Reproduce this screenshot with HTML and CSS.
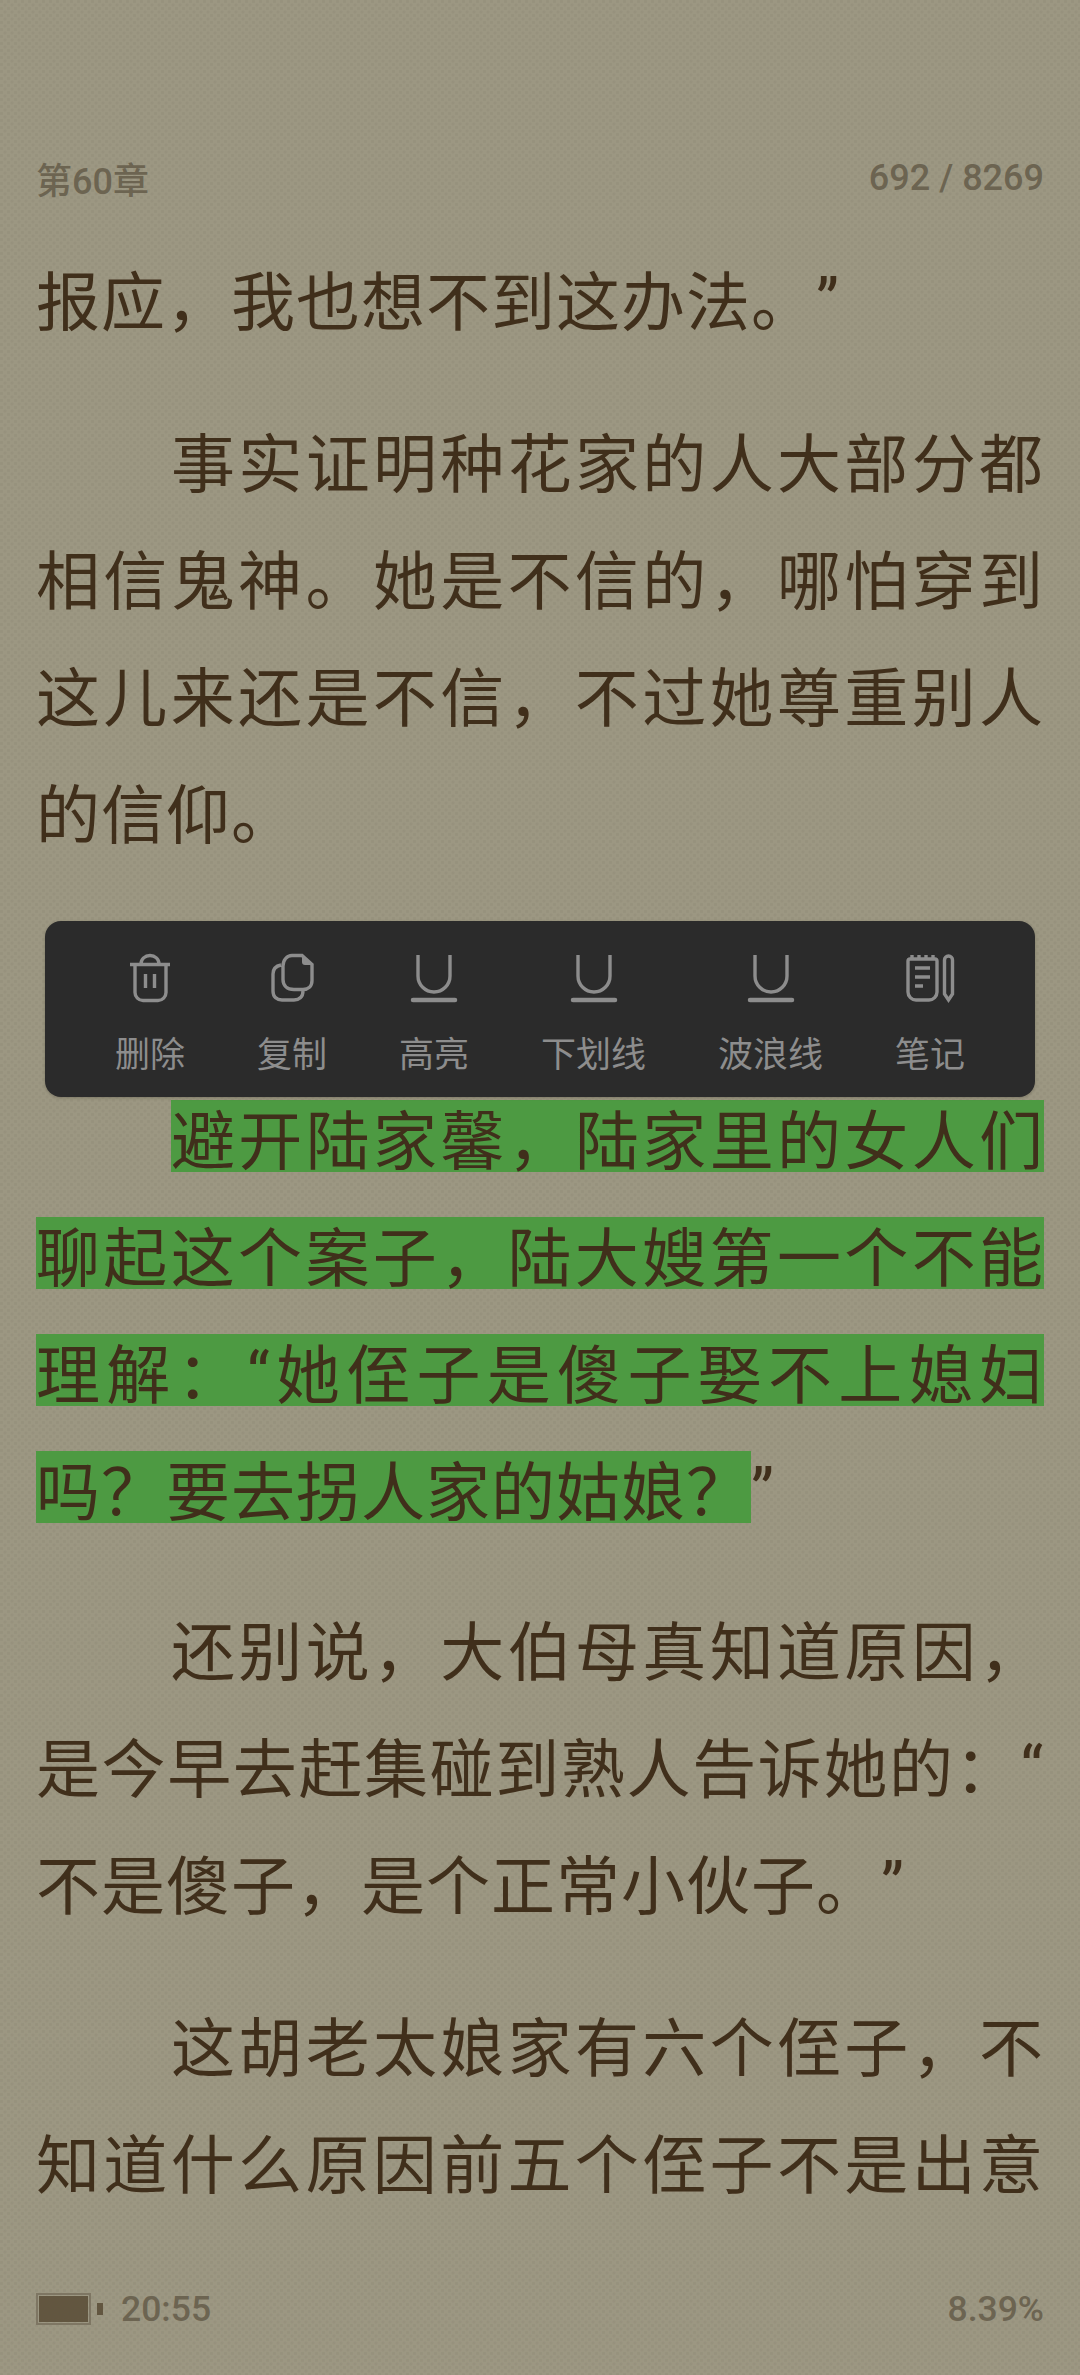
FILE: index.html
```html
<!DOCTYPE html>
<html lang="zh-CN">
<head>
<meta charset="utf-8">
<title>第60章</title>
<link rel="stylesheet" href="styles.css">
</head>
<body>
<div class="page">
  <header class="top"><span>第60章</span><span>692 / 8269</span></header>
  <main class="text">
    <p class="para"><span class="line last">报应，我也想不到这办法。<i class="q">”</i></span></p>
    <p class="para">
      <span class="line indent">事实证明种花家的人大部分都</span>
      <span class="line">相信鬼神。她是不信的，哪怕穿到</span>
      <span class="line">这儿来还是不信，不过她尊重别人</span>
      <span class="line last">的信仰。</span>
    </p>
    <p class="para gap">
      <span class="line indent hl">避开陆家馨，陆家里的女人们</span>
      <span class="line hl">聊起这个案子，陆大嫂第一个不能</span>
      <span class="line hl">理解<b class="c">：</b><i class="q">“</i>她侄子是傻子娶不上媳妇</span>
      <span class="line last"><span class="hl-run">吗？要去拐人家的姑娘？</span><i class="q">”</i></span>
    </p>
    <p class="para">
      <span class="line indent">还别说，大伯母真知道原因，</span>
      <span class="line">是今早去赶集碰到熟人告诉她的<b class="c">：</b><i class="q">“</i></span>
      <span class="line last">不是傻子，是个正常小伙子。<i class="q">”</i></span>
    </p>
    <p class="para">
      <span class="line indent">这胡老太娘家有六个侄子，不</span>
      <span class="line">知道什么原因前五个侄子不是出意</span>
    </p>
  </main>
  <footer class="bottom">
    <div class="status">
      <span class="battery"><span class="level"></span></span><span class="nub"></span>
      <span class="time">20:55</span>
    </div>
    <span>8.39%</span>
  </footer>
  <nav class="menu">
    <div class="tool">
      <svg class="ic" viewBox="0 0 48 48"><path d="M4 10.500h40M15 10c0-5 4-8.500 9-8.500s9 3.500 9 8.500M9 10.500v28a8 8 0 0 0 8 8h15a8 8 0 0 0 8-8v-28M19.500 20v14M28.500 20v14"/></svg>
      <span>删除</span>
    </div>
    <div class="tool">
      <svg class="ic" viewBox="0 0 48 48"><path d="M13 11c-5 1-8 4-8 9v17c0 6 4 9 9 9h12c5 0 9-3 9-9M24 1.500h10l10 9v16c0 6-4 9-9 9h-9c-7 0-11-4-11-10V12c0-6 4-10.500 9-10.500z"/><path class="fill" d="M34 2l10 9h-7a3 3 0 0 1-3-3z"/></svg>
      <span>复制</span>
    </div>
    <div class="tool">
      <svg class="ic" viewBox="0 0 48 48"><path d="M8 1v21a16 16 0 0 0 32 0V1"/><path class="thick" d="M3 46h42"/></svg>
      <span>高亮</span>
    </div>
    <div class="tool wide">
      <svg class="ic" viewBox="0 0 48 48"><path d="M8 1v21a16 16 0 0 0 32 0V1"/><path class="thick" d="M3 46h42"/></svg>
      <span>下划线</span>
    </div>
    <div class="tool wide">
      <svg class="ic" viewBox="0 0 48 48"><path d="M8 1v21a16 16 0 0 0 32 0V1"/><path class="thick" d="M3 46h42"/></svg>
      <span>波浪线</span>
    </div>
    <div class="tool">
      <svg class="ic" viewBox="0 0 48 48"><path d="M6 1v4M13 1v4M20 1v4M27 1v4M2 7v31a8 8 0 0 0 8 8h13a8 8 0 0 0 8-8V7q0-2-2-2H4q-2 0-2 2zM9 14h15M9 23h15M9 32h8M38.500 6a4 4 0 0 1 8 0v34l-4 6-4-6z"/></svg>
      <span>笔记</span>
    </div>
  </nav>
</div>
</body>
</html>
```
FILE: styles.css
```css
* { box-sizing: border-box; margin: 0; padding: 0; }
html, body { width: 1080px; height: 2375px; overflow: hidden; }
body {
  font-family: "Noto Sans CJK SC", Roboto, sans-serif;
  background-color: #9c9782;
  background-image:
    radial-gradient(circle at 1.5px 1.5px, rgba(84, 78, 60, .07) 1.3px, transparent 1.8px),
    radial-gradient(circle at 5px 5px, rgba(84, 78, 60, .07) 1.3px, transparent 1.8px);
  background-size: 7px 7px;
}
.page {
  position: relative;
  width: 1080px;
  height: 2375px;
  display: flex;
  flex-direction: column;
  padding: 0 36px;
}
.top, .bottom {
  display: flex;
  justify-content: space-between;
  align-items: center;
  font-family: Roboto, "Noto Sans CJK SC", sans-serif;
  font-weight: 500;
  font-size: 36px;
  color: #6c6451;
}
.top { height: 50px; margin-top: 153px; }
.text { flex: 1; padding-top: 58px; color: #402f1b; }
.para { padding-bottom: 45px; }
.gap { margin-top: 164px; padding-bottom: 43px; }
.line {
  display: block;
  height: 72px;
  line-height: 72px;
  margin-bottom: 45px;
  font-size: 64px;
  letter-spacing: 1px;
  text-align: justify;
  text-align-last: justify;
  white-space: nowrap;
  text-spacing-trim: space-all;
}
.line.last { text-align-last: left; }
.indent { margin-left: 135px; }
.hl, .hl-run { background: rgba(74, 154, 64, .97); }
.hl-run { display: inline-block; height: 72px; }
.q { font-family: Roboto, sans-serif; font-style: normal; }
.c { font-family: "Noto Sans CJK TC", sans-serif; font-weight: 400; }
.bottom { height: 50px; margin-bottom: 43px; font-size: 35.500px; }
.status { display: flex; align-items: center; }
.battery {
  width: 55px;
  height: 32px;
  border: 2px solid #7e7663;
  padding: 1px;
  display: block;
}
.level { display: block; width: 100%; height: 100%; background: #625640; }
.nub { width: 6px; height: 12px; margin-left: 6px; background: #625640; }
.time { margin-left: 18px; }
.menu {
  position: absolute;
  left: 45px;
  top: 921px;
  width: 990px;
  height: 176px;
  border-radius: 16px;
  background: #2b2b2b;
  display: flex;
  justify-content: center;
  gap: 72px;
  padding-top: 33px;
  box-shadow: 0 1px 3px rgba(60, 56, 44, .3);
}
.tool {
  display: flex;
  flex-direction: column;
  align-items: center;
  font-size: 35px;
  line-height: 46px;
  color: #8d8d8d;
  gap: 27px;
}
.ic { width: 48px; height: 48px; fill: none; stroke: #8d8d8d; stroke-width: 3.400; overflow: visible; }
.fill { fill: #8d8d8d; stroke: none; }
.thick { stroke-width: 4.500; stroke-linecap: round; }
```
